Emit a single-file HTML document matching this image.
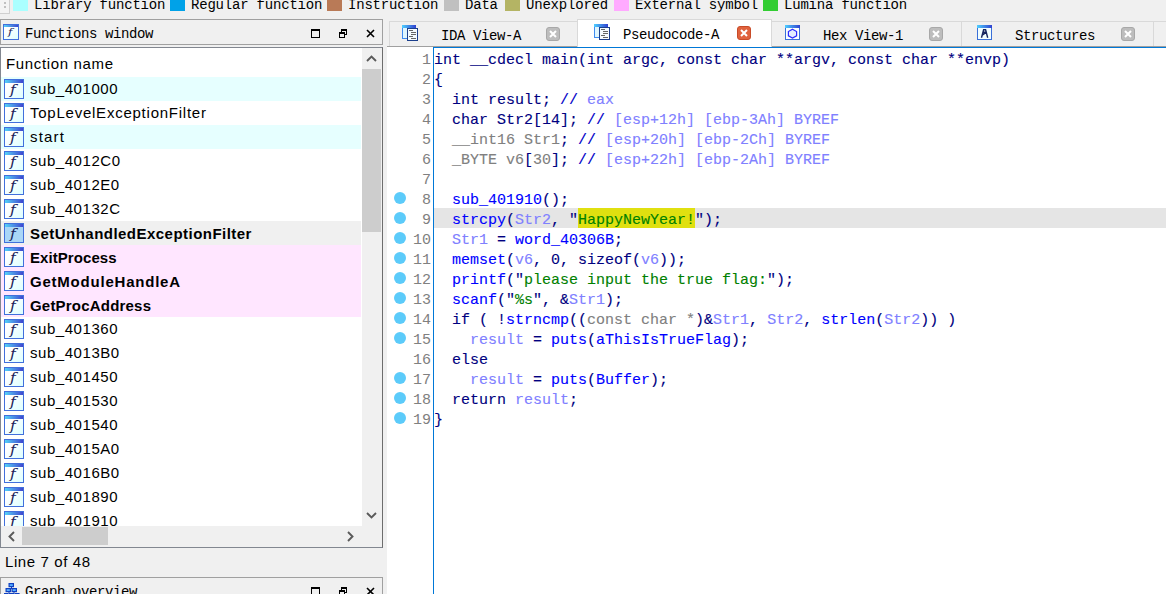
<!DOCTYPE html>
<html lang="en"><head><meta charset="utf-8"><title>IDA</title>
<style>
*{box-sizing:border-box}
html,body{margin:0;padding:0}
body{width:1166px;height:594px;overflow:hidden;background:#f0f0f0;position:relative;font-family:"Liberation Sans",sans-serif;color:#000}
body>div{position:absolute}
/* legend */
#legend{left:0;top:0;width:1166px;height:19px;background:#f0f0f0}
#legend .grip{position:absolute;left:0;top:-6px;width:10px;height:20px;border:1px solid #d0d0d0;border-left:0;background:#f4f4f4}
#legend .grip i{position:absolute;left:4px;width:2px;height:2px;background:#c0c0c0;top:7px}
#legend .grip i+i{top:11px}
.sw{position:absolute;top:0;width:15px;height:11px}
.lt,.tt{position:absolute;font-family:"Liberation Mono","DejaVu Sans Mono",monospace;font-size:14px;letter-spacing:-0.4px;white-space:pre;color:#000}
.lt{top:-3px;line-height:16px;letter-spacing:-0.2px}
/* dock titles */
.dtitle{left:0;width:383px;height:26px;border:1px solid #a0a0a0;background:#f0f0f0}
#ftitle{top:19px}
#gtitle{top:577px}
.dtitle .tt{left:24px;top:6px;line-height:16px}
.wb{position:absolute;top:9px;width:9px;height:9px}
.wb.max{left:310px;border:1px solid #000;border-top-width:2px}
.wb.res{left:338px}
.wb.res i{position:absolute;left:2px;top:0;width:6px;height:6px;border:1px solid #000;border-top-width:2px}
.wb.res u{position:absolute;left:0;top:3px;width:6px;height:6px;border:1px solid #000;border-top-width:2px;background:#f0f0f0}
.wb.cls{left:365px;top:9px}
.wb.cls svg{display:block}
/* f icon */
.fi{position:absolute;left:3px;top:2px;width:20px;height:20px;border:1px solid #4170dc;background:linear-gradient(135deg,#ffffff 30%,#dcffff 100%);overflow:hidden}
.fi:before{content:"";position:absolute;left:0;top:0;right:0;height:3px;background:linear-gradient(90deg,#55d2f8,#4046cf)}
.fi b{position:absolute;left:5px;top:3px;font:italic 400 12px/14px "DejaVu Serif","Liberation Serif",serif;color:#1a2458;transform:scaleX(1.3);transform-origin:0 0}
.fi.sm{left:2px;top:4px;width:16px;height:16px}
.fi.sm:before{height:2px}
.fi.sm b{left:4px;top:1px;font-size:10px;line-height:12px;text-shadow:none;transform:scaleX(1.2)}
.gi{position:absolute;left:3px;top:5px}
/* list */
#flist{left:0;top:47px;width:383px;height:501px;border:1px solid #828790;border-right-color:#6d6d6d;background:#fff;overflow:hidden}
#flist .hdr{position:absolute;left:5px;top:6px;font-size:15px;letter-spacing:.65px;line-height:20px;white-space:pre}
#flist .rows{position:absolute;left:0;top:0;width:361px;height:478px;overflow:hidden}
.row{position:absolute;left:0;width:360px;height:24px}
.row.rc{background:#e6ffff}
.row.rp{background:#ffe6ff}
.row.rs{background:#f0f0f0}
.row.rs .fi{background:#a9d6f7}
.row .nm{position:absolute;left:29px;top:2px;font-size:15px;letter-spacing:.75px;line-height:20px;white-space:pre}
.row.b .nm{font-weight:bold;letter-spacing:.45px;left:29px;top:3px}
.vsb{position:absolute;left:361px;top:0;width:20px;height:478px;background:#f0f0f0}
.vsb .th{position:absolute;left:0;top:21px;width:19px;height:163px;background:#cdcdcd}
.vsb .ua{position:absolute;left:4px;top:7px}
.vsb .da{position:absolute;left:4px;top:464px}
.hsb{position:absolute;left:0;top:478px;width:381px;height:21px;background:#f0f0f0}
.hsb .th{position:absolute;left:21px;top:1px;width:86px;height:18px;background:#cdcdcd}
.hsb .la{position:absolute;left:7px;top:5px}
.hsb .ra{position:absolute;left:346px;top:5px}
#fstatus{left:5px;top:552px;font-size:15px;letter-spacing:.6px;line-height:20px;white-space:pre}
/* tabs */
#tabline{left:387px;top:46px;width:779px;height:1px;background:#a0a0a0}
.tab{position:absolute;top:21px;height:25px;border:1px solid #d9d9d9;border-bottom:0;background:#f0f0f0}
.tab.act{top:19px;height:28px;background:#fff}
.tab .tt{top:6px;line-height:16px}
.tab.act .tt{top:7px}
.tab .tic{position:absolute;top:3px}
.tab.act .tic{top:4px}
.tab .ti{display:block}
.tab .tx{position:absolute;top:5px;width:14px;height:14px;border-radius:3px;background:#bdbdbd;border:1px solid #a8a8a8}
.tab.act .tx{top:6px;background:#e0623d;border-color:#c84b28}
.tab .tx svg{position:absolute;left:2px;top:2px}
/* code */
#code{left:387px;top:47px;width:779px;height:547px;background:#fff;overflow:hidden;font-family:"Liberation Mono","DejaVu Sans Mono",monospace;font-size:15px}
#bl{position:absolute;left:46px;top:0;width:1px;height:547px;background:#0078d7}
#bt{position:absolute;left:46px;top:0;width:733px;height:1px;background:#0078d7}
#hl{position:absolute;left:47px;top:161px;width:732px;height:20px;background:#e5e5e5}
.ln{position:absolute;left:0;width:779px;height:20px;line-height:25px;white-space:pre}
.ln .dot{position:absolute;left:7px;top:4px;width:12px;height:12px;border-radius:50%;background:#5ccbfa}
.ln .no{position:absolute;right:735px;top:0;color:#808080}
.ln .src{position:absolute;left:47px;top:0;-webkit-text-stroke:0.12px}
.k{color:#000080}.f{color:#0000ff}.v{color:#8080ff}.g{color:#808080}.s{color:#008000}.c{color:#0000c8}
#yl{position:absolute;left:191px;top:161px;width:117px;height:20px;background:#e0e010}

</style></head>
<body>
<div id="legend"><div class="grip"><i></i><i></i></div>
<span class="sw" style="left:13px;background:#aaffff"></span><span class="lt" style="left:34px">Library function</span>
<span class="sw" style="left:170px;background:#00a2e8"></span><span class="lt" style="left:191px">Regular function</span>
<span class="sw" style="left:327px;background:#b97a57"></span><span class="lt" style="left:348px">Instruction</span>
<span class="sw" style="left:444px;background:#c0c0c0"></span><span class="lt" style="left:465px">Data</span>
<span class="sw" style="left:505px;background:#b4b464"></span><span class="lt" style="left:526px">Unexplored</span>
<span class="sw" style="left:614px;background:#ffaaff"></span><span class="lt" style="left:635px">External symbol</span>
<span class="sw" style="left:763px;background:#32cd32"></span><span class="lt" style="left:784px">Lumina function</span>
</div>
<div id="ftitle" class="dtitle"><span class="fi sm"><b>f</b></span><span class="tt">Functions window</span>
<span class="wb max"></span><span class="wb res"><i></i><u></u></span><span class="wb cls"><svg width="9" height="9" viewBox="0 0 9 9"><path d="M1 1 L8 8 M8 1 L1 8" stroke="#000" stroke-width="1.6" fill="none"/></svg></span></div>
<div id="flist"><div class="hdr">Function name</div>
<div class="rows">
<div class="row rc" style="top:29px"><span class="fi"><b>f</b></span><span class="nm" style="letter-spacing:0.55px">sub_401000</span></div>
<div class="row" style="top:53px"><span class="fi"><b>f</b></span><span class="nm" style="letter-spacing:0.76px">TopLevelExceptionFilter</span></div>
<div class="row rc" style="top:77px"><span class="fi"><b>f</b></span><span class="nm" style="letter-spacing:1.2px">start</span></div>
<div class="row" style="top:101px"><span class="fi"><b>f</b></span><span class="nm" style="letter-spacing:0.55px">sub_4012C0</span></div>
<div class="row" style="top:125px"><span class="fi"><b>f</b></span><span class="nm" style="letter-spacing:0.55px">sub_4012E0</span></div>
<div class="row" style="top:149px"><span class="fi"><b>f</b></span><span class="nm" style="letter-spacing:0.55px">sub_40132C</span></div>
<div class="row rs b" style="top:173px"><span class="fi"><b>f</b></span><span class="nm" style="letter-spacing:0.47px">SetUnhandledExceptionFilter</span></div>
<div class="row rp b" style="top:197px"><span class="fi"><b>f</b></span><span class="nm" style="letter-spacing:0.07px">ExitProcess</span></div>
<div class="row rp b" style="top:221px"><span class="fi"><b>f</b></span><span class="nm" style="letter-spacing:0.78px">GetModuleHandleA</span></div>
<div class="row rp b" style="top:245px"><span class="fi"><b>f</b></span><span class="nm" style="letter-spacing:0.2px">GetProcAddress</span></div>
<div class="row" style="top:269px"><span class="fi"><b>f</b></span><span class="nm" style="letter-spacing:0.55px">sub_401360</span></div>
<div class="row" style="top:293px"><span class="fi"><b>f</b></span><span class="nm" style="letter-spacing:0.55px">sub_4013B0</span></div>
<div class="row" style="top:317px"><span class="fi"><b>f</b></span><span class="nm" style="letter-spacing:0.55px">sub_401450</span></div>
<div class="row" style="top:341px"><span class="fi"><b>f</b></span><span class="nm" style="letter-spacing:0.55px">sub_401530</span></div>
<div class="row" style="top:365px"><span class="fi"><b>f</b></span><span class="nm" style="letter-spacing:0.55px">sub_401540</span></div>
<div class="row" style="top:389px"><span class="fi"><b>f</b></span><span class="nm" style="letter-spacing:0.55px">sub_4015A0</span></div>
<div class="row" style="top:413px"><span class="fi"><b>f</b></span><span class="nm" style="letter-spacing:0.55px">sub_4016B0</span></div>
<div class="row" style="top:437px"><span class="fi"><b>f</b></span><span class="nm" style="letter-spacing:0.55px">sub_401890</span></div>
<div class="row" style="top:461px"><span class="fi"><b>f</b></span><span class="nm" style="letter-spacing:0.55px">sub_401910</span></div>
</div>
<div class="vsb"><svg class="ua" width="11" height="7" viewBox="0 0 11 7"><path d="M1 6 L5.5 1.5 L10 6" stroke="#5a5a5a" stroke-width="1.9" fill="none"/></svg><div class="th"></div><svg class="da" width="11" height="7" viewBox="0 0 11 7"><path d="M1 1 L5.5 5.5 L10 1" stroke="#5a5a5a" stroke-width="1.9" fill="none"/></svg></div>
<div class="hsb"><svg class="la" width="7" height="11" viewBox="0 0 7 11"><path d="M6 1 L1.5 5.5 L6 10" stroke="#5a5a5a" stroke-width="1.9" fill="none"/></svg><div class="th"></div><svg class="ra" width="7" height="11" viewBox="0 0 7 11"><path d="M1 1 L5.5 5.5 L1 10" stroke="#5a5a5a" stroke-width="1.9" fill="none"/></svg></div>
</div>
<div id="fstatus">Line 7 of 48</div>
<div id="gtitle" class="dtitle"><span class="gi"><svg width="16" height="16" viewBox="0 0 16 16"><path d="M7.5 3 V6 M5 8 V10 M10 8 V10" stroke="#1040c0" fill="none"/><g fill="#58b0ff" stroke="#1040c0" stroke-width="1.2"><rect x="5.1" y="0.6" width="4.3" height="3"/><rect x="2.1" y="5.6" width="4.3" height="3"/><rect x="8.1" y="5.6" width="4.3" height="3"/><rect x="0.1" y="10.6" width="4" height="3"/><rect x="5.6" y="10.6" width="4" height="3"/><rect x="11" y="10.6" width="4" height="3"/></g></svg></span><span class="tt">Graph overview</span>
<span class="wb max"></span><span class="wb res"><i></i><u></u></span><span class="wb cls"><svg width="9" height="9" viewBox="0 0 9 9"><path d="M1 1 L8 8 M8 1 L1 8" stroke="#000" stroke-width="1.6" fill="none"/></svg></span></div>
<div id="tabline"></div>
<div class="tab" style="left:389px;width:189px"><span class="tic" style="left:12px"><svg class="ti" width="16" height="16" viewBox="0 0 16 16"><defs><linearGradient id="gA" x1="0" x2="1"><stop offset="0" stop-color="#4fd0ff"/><stop offset="1" stop-color="#3040d0"/></linearGradient></defs><rect x="0.5" y="0.5" width="13" height="13" fill="#dff6ff" stroke="#3f8cf0"/><rect x="0" y="0" width="14" height="3" fill="url(#gA)"/><rect x="5.5" y="3.5" width="10" height="12" fill="#f4fbff" stroke="#1c3f8c"/><path d="M7 5.5 H11 M9 7.5 H14 M9 9.5 H14 M7 11.5 H11 M9 13.5 H14" stroke="#666" stroke-width="1" /></svg></span><span class="tt" style="left:51px">IDA View-A</span><span class="tx" style="left:156px"><svg width="8" height="8" viewBox="0 0 8 8"><path d="M1 1 L7 7 M7 1 L1 7" stroke="#fff" stroke-width="2" fill="none"/></svg></span></div>
<div class="tab act" style="left:577px;width:195px"><span class="tic" style="left:16px"><svg class="ti" width="16" height="16" viewBox="0 0 16 16"><defs><linearGradient id="gB" x1="0" x2="1"><stop offset="0" stop-color="#4fd0ff"/><stop offset="1" stop-color="#3040d0"/></linearGradient></defs><rect x="0.5" y="0.5" width="13" height="13" fill="#dff6ff" stroke="#3f8cf0"/><rect x="0" y="0" width="14" height="3" fill="url(#gB)"/><rect x="5.5" y="3.5" width="10" height="12" fill="#f4fbff" stroke="#1c3f8c"/><path d="M7 5.5 H11 M9 7.5 H14 M9 9.5 H14 M7 11.5 H11 M9 13.5 H14" stroke="#666" stroke-width="1" /></svg></span><span class="tt" style="left:45px">Pseudocode-A</span><span class="tx" style="left:159px"><svg width="8" height="8" viewBox="0 0 8 8"><path d="M1 1 L7 7 M7 1 L1 7" stroke="#fff" stroke-width="2" fill="none"/></svg></span></div>
<div class="tab" style="left:771px;width:191px"><span class="tic" style="left:13px"><svg class="ti" width="15" height="15" viewBox="0 0 15 15"><defs><linearGradient id="gH" x1="0" x2="1"><stop offset="0" stop-color="#4fd0ff"/><stop offset="1" stop-color="#3040d0"/></linearGradient></defs><rect x="0.5" y="0.5" width="14" height="14" fill="#fbfeff" stroke="#3a6fd8"/><rect x="0" y="0" width="15" height="3" fill="url(#gH)"/><path d="M7.5 4.3 L11.6 6.6 V10.9 L7.5 13.1 L3.4 10.9 V6.6 Z" fill="#e4ecff" stroke="#2b2bff" stroke-width="1.2"/></svg></span><span class="tt" style="left:51px">Hex View-1</span><span class="tx" style="left:157px"><svg width="8" height="8" viewBox="0 0 8 8"><path d="M1 1 L7 7 M7 1 L1 7" stroke="#fff" stroke-width="2" fill="none"/></svg></span></div>
<div class="tab" style="left:961px;width:193px"><span class="tic" style="left:15px"><svg class="ti" width="15" height="15" viewBox="0 0 15 15"><defs><linearGradient id="gS" x1="0" x2="1"><stop offset="0" stop-color="#4fd0ff"/><stop offset="1" stop-color="#3040d0"/></linearGradient></defs><rect x="0.5" y="0.5" width="14" height="14" fill="#f2feff" stroke="#3a6fd8"/><rect x="0" y="0" width="15" height="3" fill="url(#gS)"/><path d="M4.5 12.8 L6.6 4.8 H8.6 L10.7 12.8 M6 7.3 H9.2 M5.2 10.3 L8.8 7.6" fill="none" stroke="#15255f" stroke-width="1.4"/></svg></span><span class="tt" style="left:53px">Structures</span><span class="tx" style="left:159px"><svg width="8" height="8" viewBox="0 0 8 8"><path d="M1 1 L7 7 M7 1 L1 7" stroke="#fff" stroke-width="2" fill="none"/></svg></span></div>
<div class="tab" style="left:1153px;width:20px"></div>
<div id="code">
<div id="bl"></div><div id="bt"></div><div id="hl"></div><div id="yl"></div>
<div class="ln" style="top:1px"><span class="no">1</span><span class="src"><span class="k">int __cdecl main(int argc, const char **argv, const char **envp)</span></span></div>
<div class="ln" style="top:21px"><span class="no">2</span><span class="src"><span class="k">{</span></span></div>
<div class="ln" style="top:41px"><span class="no">3</span><span class="src"><span class="k">  int result; </span><span class="c">// </span><span class="v">eax</span></span></div>
<div class="ln" style="top:61px"><span class="no">4</span><span class="src"><span class="k">  char Str2[14]; </span><span class="c">// </span><span class="v">[esp+12h] [ebp-3Ah] BYREF</span></span></div>
<div class="ln" style="top:81px"><span class="no">5</span><span class="src"><span class="g">  __int16 Str1</span><span class="k">; </span><span class="c">// </span><span class="v">[esp+20h] [ebp-2Ch] BYREF</span></span></div>
<div class="ln" style="top:101px"><span class="no">6</span><span class="src"><span class="g">  _BYTE v6</span><span class="k">[</span><span class="g">30</span><span class="k">]; </span><span class="c">// </span><span class="v">[esp+22h] [ebp-2Ah] BYREF</span></span></div>
<div class="ln" style="top:121px"><span class="no">7</span><span class="src"></span></div>
<div class="ln" style="top:141px"><i class="dot"></i><span class="no">8</span><span class="src"><span class="k">  </span><span class="f">sub_401910</span><span class="k">();</span></span></div>
<div class="ln" style="top:161px"><i class="dot"></i><span class="no">9</span><span class="src"><span class="k">  </span><span class="f">strcpy</span><span class="k">(</span><span class="v">Str2</span><span class="k">, "</span><span class="s hl">HappyNewYear!</span><span class="k">");</span></span></div>
<div class="ln" style="top:181px"><i class="dot"></i><span class="no">10</span><span class="src"><span class="k">  </span><span class="v">Str1</span><span class="k"> = </span><span class="f">word_40306B</span><span class="k">;</span></span></div>
<div class="ln" style="top:201px"><i class="dot"></i><span class="no">11</span><span class="src"><span class="k">  </span><span class="f">memset</span><span class="k">(</span><span class="v">v6</span><span class="k">, 0, sizeof(</span><span class="v">v6</span><span class="k">));</span></span></div>
<div class="ln" style="top:221px"><i class="dot"></i><span class="no">12</span><span class="src"><span class="k">  </span><span class="f">printf</span><span class="k">("</span><span class="s">please input the true flag:</span><span class="k">");</span></span></div>
<div class="ln" style="top:241px"><i class="dot"></i><span class="no">13</span><span class="src"><span class="k">  </span><span class="f">scanf</span><span class="k">("</span><span class="s">%s</span><span class="k">", &amp;</span><span class="v">Str1</span><span class="k">);</span></span></div>
<div class="ln" style="top:261px"><i class="dot"></i><span class="no">14</span><span class="src"><span class="k">  if ( !</span><span class="f">strncmp</span><span class="k">((</span><span class="g">const char *</span><span class="k">)&amp;</span><span class="v">Str1</span><span class="k">, </span><span class="v">Str2</span><span class="k">, </span><span class="f">strlen</span><span class="k">(</span><span class="v">Str2</span><span class="k">)) )</span></span></div>
<div class="ln" style="top:281px"><i class="dot"></i><span class="no">15</span><span class="src"><span class="k">    </span><span class="v">result</span><span class="k"> = </span><span class="f">puts</span><span class="k">(</span><span class="f">aThisIsTrueFlag</span><span class="k">);</span></span></div>
<div class="ln" style="top:301px"><span class="no">16</span><span class="src"><span class="k">  else</span></span></div>
<div class="ln" style="top:321px"><i class="dot"></i><span class="no">17</span><span class="src"><span class="k">    </span><span class="v">result</span><span class="k"> = </span><span class="f">puts</span><span class="k">(</span><span class="f">Buffer</span><span class="k">);</span></span></div>
<div class="ln" style="top:341px"><i class="dot"></i><span class="no">18</span><span class="src"><span class="k">  return </span><span class="v">result</span><span class="k">;</span></span></div>
<div class="ln" style="top:361px"><i class="dot"></i><span class="no">19</span><span class="src"><span class="k">}</span></span></div>
</div>
</body></html>
